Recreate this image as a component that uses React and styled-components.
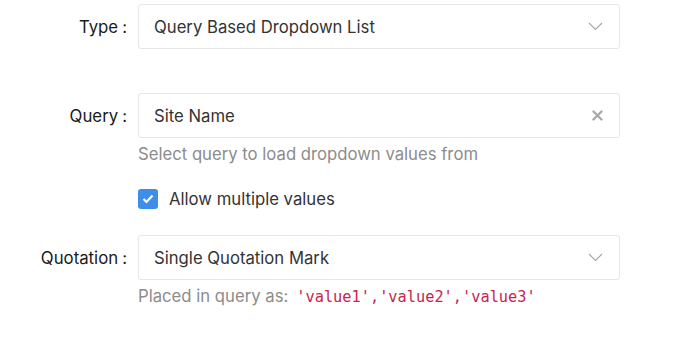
import React from "react";
import styled, { createGlobalStyle } from "styled-components";

const GlobalStyle = createGlobalStyle`
  body {
    margin: 0;
    background: #fff;
    font-family: Inter, "Noto Sans", sans-serif;
  }
`;

const Form = styled.div`
  width: 690px;
  height: 337px;
  padding-top: 4px;
  box-sizing: border-box;
`;

const Item = styled.div`
  display: grid;
  grid-template-columns: 138px 482px;
  margin-bottom: ${(p) => p.gap || 0}px;
`;

const Label = styled.div`
  height: 45px;
  display: flex;
  align-items: center;
  justify-content: flex-end;
  padding-right: 11px;
  font-size: 16.8px;
  color: #1a1a1a;

  &::after {
    content: ":";
    margin-left: 4px;
  }
`;

const Control = styled.div`
  grid-column: 2;
  display: flex;
  flex-direction: column;
`;

const Select = styled.div`
  height: 45px;
  box-sizing: border-box;
  border: 1px solid #e6e6e6;
  border-radius: 3px;
  display: flex;
  align-items: center;
  justify-content: space-between;
  padding: 0 16px 0 15px;
  font-size: 16.7px;
  color: #333;
`;

const Help = styled.div`
  margin-top: 5px;
  font-size: 16.7px;
  color: #8c8c8c;
  line-height: 22px;
`;

const Code = styled.code`
  font-family: "DejaVu Sans Mono", monospace;
  font-size: 15.3px;
  color: #c7254e;
  margin-left: 8px;
`;

const CheckRow = styled.label`
  display: flex;
  align-items: center;
  gap: 11px;
  font-size: 16.7px;
  color: #333;
  height: 22px;
`;

const Box = styled.span`
  width: 20px;
  height: 20px;
  border-radius: 3px;
  background: #3d8eea;
  display: flex;
  align-items: center;
  justify-content: center;
`;

const Chevron = () => (
  <svg width="15" height="9" viewBox="0 0 15 9" fill="none">
    <path d="M1 1l6.5 6.5L14 1" stroke="#a6a6a6" strokeWidth="1.1" />
  </svg>
);

const Clear = () => (
  <svg width="11" height="11" viewBox="0 0 11 11">
    <path d="M1.5 1.5l8 8M9.5 1.5l-8 8" stroke="#a9a9a9" strokeWidth="2.4" strokeLinecap="round" />
  </svg>
);

const App = () => (
  <Form>
    <GlobalStyle />
    <Item gap={44}>
      <Label>Type</Label>
      <Control>
        <Select>
          Query Based Dropdown List
          <Chevron />
        </Select>
      </Control>
    </Item>
    <Item gap={23}>
      <Label>Query</Label>
      <Control>
        <Select>
          Site Name
          <Clear />
        </Select>
        <Help>Select query to load dropdown values from</Help>
      </Control>
    </Item>
    <Item gap={25}>
      <Control>
        <CheckRow>
          <Box>
            <svg width="12" height="10" viewBox="0 0 12 10">
              <path d="M1.5 5l3 3 6-6.5" stroke="#fff" strokeWidth="2.2" fill="none" />
            </svg>
          </Box>
          Allow multiple values
        </CheckRow>
      </Control>
    </Item>
    <Item>
      <Label>Quotation</Label>
      <Control>
        <Select>
          Single Quotation Mark
          <Chevron />
        </Select>
        <Help>
          Placed in query as:
          <Code>'value1','value2','value3'</Code>
        </Help>
      </Control>
    </Item>
  </Form>
);

export default App;
